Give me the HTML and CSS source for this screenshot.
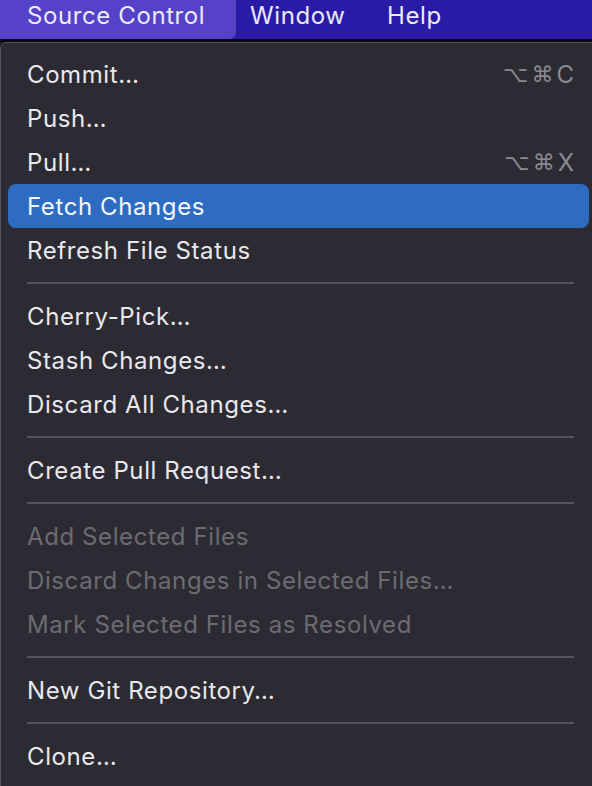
FILE: index.html
```html
<!DOCTYPE html>
<html>
<head>
<meta charset="utf-8">
<link rel="stylesheet" href="styles.css">
</head>
<body>
<div class="screen">
  <div class="menubar">
    <div class="mb-item active">Source Control</div>
    <div class="mb-item">Window</div>
    <div class="mb-item">Help</div>
  </div>
  <div class="bar-edge"></div>
  <div class="menu">
    <div class="item"><span>Commit…</span><span class="kbd"><span class="sym">⌥</span><span class="sym">⌘</span><span>C</span></span></div>
    <div class="item"><span>Push…</span></div>
    <div class="item"><span>Pull…</span><span class="kbd"><span class="sym">⌥</span><span class="sym">⌘</span><span>X</span></span></div>
    <div class="item selected"><span>Fetch Changes</span></div>
    <div class="item"><span>Refresh File Status</span></div>
    <div class="sep"></div>
    <div class="item"><span>Cherry-Pick…</span></div>
    <div class="item"><span>Stash Changes…</span></div>
    <div class="item"><span>Discard All Changes…</span></div>
    <div class="sep"></div>
    <div class="item"><span>Create Pull Request…</span></div>
    <div class="sep"></div>
    <div class="item disabled"><span>Add Selected Files</span></div>
    <div class="item disabled"><span>Discard Changes in Selected Files…</span></div>
    <div class="item disabled"><span>Mark Selected Files as Resolved</span></div>
    <div class="sep"></div>
    <div class="item"><span>New Git Repository…</span></div>
    <div class="sep"></div>
    <div class="item"><span>Clone…</span></div>
  </div>
</div>
</body>
</html>
```

FILE: styles.css
```css
html, body {
  margin: 0;
  padding: 0;
  background: #1c1b22;
}
.screen {
  width: 592px;
  height: 786px;
  overflow: hidden;
  font-family: Inter, "Noto Sans", "Liberation Sans", sans-serif;
  font-size: 24px;
  letter-spacing: 0.6px;
  -webkit-font-smoothing: antialiased;
}
.menubar {
  display: flex;
  height: 39px;
  background: #2a1ba7;
  color: #ece9fb;
}
.mb-item {
  display: flex;
  align-items: center;
  padding-bottom: 8px;
}
.mb-item.active {
  width: 209px;
  padding-left: 27px;
  background: #5642c8;
  border-bottom-right-radius: 7px;
}
.mb-item:nth-child(2) {
  padding-left: 14px;
  width: 137px;
}
.bar-edge {
  height: 3px;
  background: #08070c;
}
.menu {
  width: 620px;
  height: 760px;
  box-sizing: border-box;
  background: #2c2b33;
  border: 1px solid #56555c;
  border-radius: 7px 0 0 7px;
  padding-top: 9px;
  color: #e9e8ec;
}
.item {
  display: flex;
  justify-content: space-between;
  align-items: center;
  height: 44px;
  margin-left: 7px;
  width: 581px;
  box-sizing: border-box;
  padding: 0 15px 0 19px;
  border-radius: 8px;
}
.item.selected {
  background: #2e6cc2;
  color: #f4f7fc;
}
.item.disabled {
  color: #6c6b72;
}
.kbd {
  display: flex;
  align-items: center;
  gap: 3px;
  color: #8b8a91;
  letter-spacing: 0;
}
.kbd .sym {
  font-family: "DejaVu Sans", sans-serif;
  font-size: 22px;
}
.sep {
  height: 22px;
  display: flex;
  align-items: center;
}
.sep::before {
  content: "";
  display: block;
  margin-left: 26px;
  width: 547px;
  height: 2px;
  background: #55545b;
}
```
